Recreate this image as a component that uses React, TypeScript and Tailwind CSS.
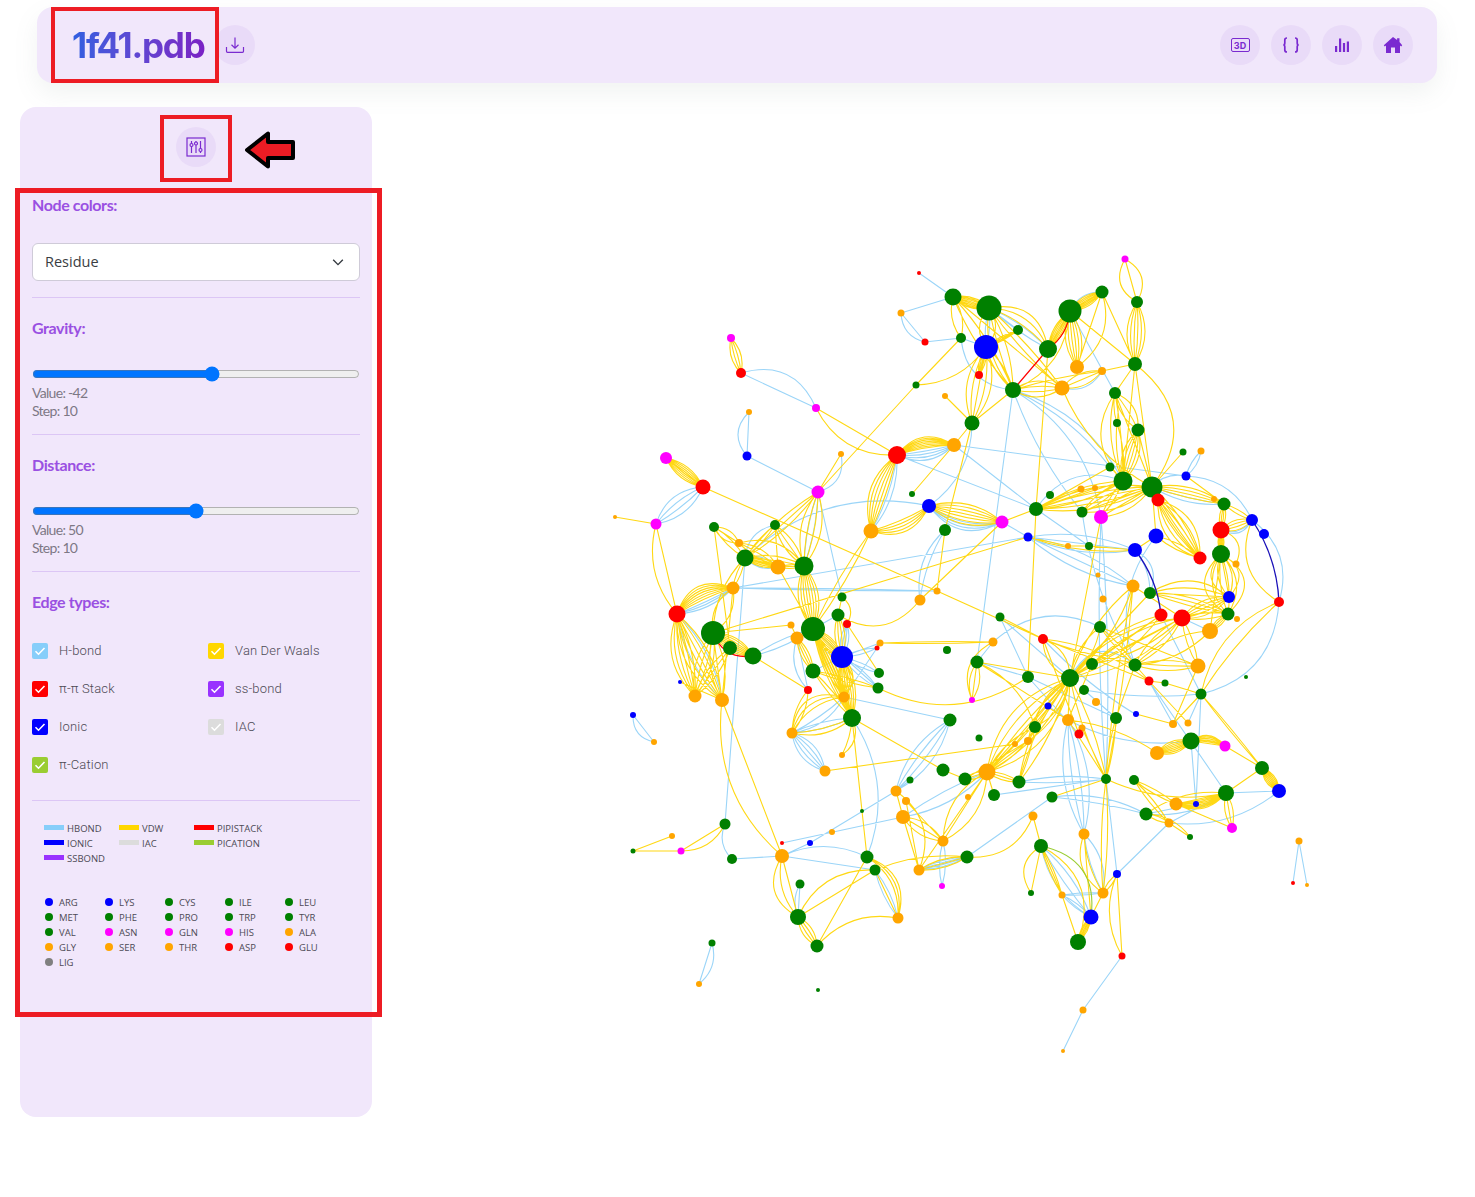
import React from 'react'

// graph data in page coordinates: x,y,radius
const greens = `953,297,8.5;989,308,12.5;1018,330,5;961,338,5;1048,349,9;1070,311,11.5;1102,292,6.5;1137,302,6;1135,364,7;1013,390,8;1115,393,6;972,423,7.5;1117,423,4;1138,430,6.5;1183,452,3.5;1110,467,4.5;1123,481,9.5;1152,487,10.5;1050,495,4;1224,504,6.5;1036,509,7;1082,512,5.5;1089,546,4;1221,554,9;1150,593,6;1228,614,6.5;1000,617,4.5;1100,627,6;947,650,4;977,662,6.5;1135,665,6.5;1092,664,6;1028,677,6;1070,678,9;1246,677,2;1165,683,3.5;1201,694,5.5;1084,690,5;1116,718,6;1035,727,6;979,738,3.5;1191,741,8.5;1262,768,7;965,779,6.5;1019,782,6.5;1106,779,5;1134,780,5;1226,793,8;994,795,6;1052,797,5.5;1146,814,6.5;1190,837,3;1041,846,7;967,857,6.5;1031,893,3;1078,942,8;916,385,3.5;912,494,3;714,527,5;775,525,5;745,558,8.5;804,566,9.5;945,530,6;842,597,4.5;838,615,6.5;713,633,12;813,629,12;730,648,7;753,656,8.5;813,671,7.5;879,673,5;878,688,5.5;852,718,9;950,720,6.5;943,770,6.5;910,780,3.5;862,811,2;725,824,5.5;633,851,2.5;867,857,6.5;732,859,5;875,870,5.5;800,884,4.5;798,917,8;817,946,6.5;712,943,3.5;818,990,2`
const oranges = `901,313,3.5;945,396,3;749,412,3;841,454,3;615,517,2;1077,367,7;1102,371,4;1062,388,7.5;954,445,7;1201,451,3.5;1081,489,3.5;1095,488,3;1214,499,3;1068,546,3;1236,564,3.5;1098,575,2.5;1133,586,6.5;1103,599,3.5;1237,619,3;1210,631,8;993,642,4.5;1198,666,7.5;1096,702,4;1068,720,6;1173,724,4;1188,723,3.5;1082,728,3.5;1028,741,4;1015,744,3;1157,753,7;987,772,8.5;968,797,3;1176,804,6.5;1033,816,4.5;1169,823,4.5;1299,841,3.5;1084,834,5.5;1307,885,2;1062,895,3.5;1103,893,5.5;1083,1010,3.5;1063,1051,2;871,531,7.5;739,543,4;778,567,7.5;733,588,6.5;937,591,3.5;920,600,5.5;791,625,3.5;797,638,6.5;880,643,3.5;695,696,6.5;722,700,7;844,697,5.5;792,733,5.5;654,742,3;842,755,3;825,771,5.5;896,791,5.5;906,801,4;903,817,7;672,836,3;832,832,3;943,841,5.5;782,856,7;919,870,5.5;898,918,5.5;699,984,3`
const reds = `919,273,2;925,342,3.5;741,373,5;897,455,9;703,487,7.5;979,375,4;1158,500,6.5;1221,530,8.5;1200,558,6.5;1279,602,5;1161,615,6.5;1182,618,8.5;1043,639,5;1149,681,4.5;1079,734,4.5;1293,883,2;1122,956,3.5;677,614,8.5;847,624,4;877,648,2.5;808,690,4;782,843,2`
const blues = `747,456,4.5;929,506,7;986,347,12;1186,476,4.5;1252,520,6;1264,534,5;1028,537,4.5;1156,536,7.5;1135,550,7;1229,597,6;1048,706,3.5;1136,714,3;1279,791,7;1196,804,3;1117,874,4;1091,917,7.5;842,657,11;680,682,2;633,715,3;810,843,3`
const magentas = `731,338,4;816,408,4;666,458,6;818,492,6.5;656,524,5.5;1125,259,3.5;1101,517,7;1002,522,6.5;972,700,3;1225,746,5.5;1232,828,5;681,851,3.5;942,886,3`

// edges: x1,y1,x2,y2,count,bulgeFrom,bulgeTo
const hbond = `919,273,953,297;901,313,953,297;901,313,925,342,2,0,-7;925,342,961,338;961,338,986,347;741,373,816,408,2,0,18;749,412,747,456,2,0,-10;747,456,818,492;703,487,656,524,4,-10,8;818,492,841,454,1,-10;897,455,954,445,4,-1,-10;897,455,871,531,2,4,8;745,558,929,506,1,25;989,308,986,347,2,-2,2;989,308,1018,330;989,308,1048,349,2,-2,4;986,347,979,375;961,338,1013,390,1,-15;1070,311,1102,292,1,6;1070,311,1115,393;1102,371,1062,388,1,8;1013,390,977,662;1013,390,1110,467,1,8;1013,390,1123,481,1,15;1013,390,1082,512,1,-6;1013,390,1101,517,1,18;1201,451,1186,476,2,-2,3;1186,476,1152,487,1,-5;1186,476,1252,520,1,12;1036,509,1123,481,1,18;1152,487,1224,504,2,-6,-2;1221,530,1252,520,2,-8,-6;1252,520,1279,602,1,15;1279,602,1201,694,1,22;954,445,1186,476;897,455,1036,509;954,445,1036,509;972,423,929,506,1,12;945,530,920,600,2,-10,-4;1002,522,1028,537;1002,522,929,506,4,8,16;1028,537,1135,550,3,-8,8;1028,537,1133,586,3,-8,8;733,588,1028,537;733,588,937,591,2,-1,1;818,492,804,566,2,-3,3;818,492,842,597;775,525,745,558,1,-8;745,558,778,567,2,-5,5;745,558,725,824;733,588,677,614,3,1,6;677,614,722,700,2,-8,8;753,656,813,629,2,-3,3;813,671,842,657;797,638,808,690,2,-8,0;838,615,813,629;847,624,842,657,4,-4,4;842,657,877,648,2,-2,2;842,657,880,643;842,657,879,673,2,-2,2;842,657,878,688,2,-3,3;813,629,878,688;877,648,844,697;792,733,852,718,2,-3,3;792,733,844,697,2,-8,-2;792,733,825,771,5,-8,8;844,697,950,720;852,718,867,857,1,18;725,824,732,859,1,-6;633,715,654,742,2,0,-7;712,943,699,984,2,0,7;732,859,782,856;782,856,810,843;782,843,903,817;810,843,896,791;782,856,867,857,1,10;782,856,875,870;800,884,798,917,2,0,-4;875,870,898,918,2,-3,3;919,870,967,857,4,-3,3;943,841,942,886,2,-3,3;910,780,896,791;896,791,950,720,4,-10,10;987,772,903,817,2,-3,8;994,795,1106,779;1019,782,1106,779,2,-2,4;967,857,1052,797;1068,720,1084,834,4,-12,12;1084,834,1103,893,2,-3,8;1106,779,1117,874;1041,846,1091,917,3,-10,6;1062,895,1103,893,2,-1,1;1062,895,1091,917,2,-2,2;1117,874,1169,823;1122,956,1083,1010;1083,1010,1063,1051;1169,823,1226,793;1279,791,1226,793;1279,791,1169,823,1,12;1196,804,1191,741;1196,804,1201,694;1146,814,1196,804;1052,797,1146,814,2,2,8;1146,814,1226,793,1,-8;993,642,1100,627,1,18;993,642,977,662;977,662,1028,677;1000,617,1070,678;1028,677,1079,734;1068,720,1048,706;1068,720,1191,741,1,-10;1084,690,1201,694,1,-4;1116,718,1084,690;1101,517,1106,779,2,-4,4;1149,681,1226,793;1149,681,1173,724;1201,694,1188,723;1182,618,1210,631;1082,512,1135,665,1,-8;1156,536,1135,665,1,-18;1161,615,1201,694;1135,550,1150,593,2,4,10;1299,841,1293,883;1299,841,1307,885;1135,665,1070,678,1,-20;1028,677,1116,718;1036,509,1089,546;842,657,813,629,1,8;1000,617,1028,677;1043,639,1135,714,1,-4`
const vdw = `731,338,741,373,4,-5,5;818,492,841,454;703,487,666,458,8,-6,6;897,455,954,445,8,2,13;897,455,871,531,6,-14,2;871,531,929,506,5,-14,-2;953,297,989,308,8,-5,5;953,297,961,338,2,-5,5;989,308,986,347,2,-8,8;989,308,1048,349,3,5,18;989,308,1013,390,3,-10,6;986,347,1013,390,2,-4,4;986,347,979,375,5,-3,3;986,347,972,423,5,-12,12;953,297,1013,390,2,-5,5;953,297,1062,388;1018,330,986,347,4,-2,2;989,308,1062,388,2,-3,3;1048,349,1070,311,8,-5,5;1070,311,1102,292,8,-5,5;1070,311,1077,367,6,-8,8;1102,292,1077,367,2,0,14;1070,311,1135,364;1102,292,1135,364;1125,259,1137,302,3,-11,11;1137,302,1135,364,6,-9,9;1135,364,1102,371;1102,371,1062,388,3,-6,6;1062,388,1013,390,4,-8,8;1013,390,1102,371,1,2;1070,311,1013,390,1,15;1013,390,972,423;1048,349,1036,509;1062,388,1152,487,1,-12;1135,364,1123,481;1135,364,1152,487;1135,364,1152,487,1,30;1115,393,1117,423,2,-2,2;1115,393,1138,430,3,-5,8;1115,393,1123,481,3,-18,2;1115,393,1152,487;1138,430,1123,481,6,-8,8;1117,423,1123,481,2,-3,3;1138,430,1152,487;1183,452,1152,487;1186,476,1224,504;1110,467,1123,481;1110,467,1036,509;1095,488,1036,509;1081,489,1036,509;1036,509,1123,481,3,-6,6;1036,509,1152,487,5,-10,10;1082,512,1123,481,2,-4,4;1082,512,1152,487,3,-8,8;1101,517,1152,487,3,-7,7;1101,517,1123,481,2,-2,2;1158,500,1200,558,6,-14,14;1152,487,1200,558,4,-6,6;1152,487,1224,504,4,-2,8;1224,504,1221,530,4,-3,3;1221,530,1252,520,4,-5,5;1221,530,1221,554,6,-3,3;1224,504,1252,520,2,-2,2;1221,554,1229,597,5,-14,14;1221,554,1228,614,6,-20,20;1221,554,1236,564;1221,530,1236,564,1,10;1252,520,1279,602,1,-18;1279,602,1201,694,2,-16,-4;1135,550,1156,536;1156,536,1200,558,2,-3,3;1156,536,1152,487;1182,618,1229,597,5,-7,7;1182,618,1228,614,2,-3,3;1182,618,1133,586;1150,593,1229,597,3,0,14;1150,593,1228,614,3,-2,6;1210,631,1221,554;1210,631,1228,614,4,-3,3;1182,618,1198,666,2,-3,3;1135,665,1198,666,2,-5,5;1135,665,1182,618,2,-6,6;1135,665,1210,631,2,-8,8;1070,678,1182,618,3,-14,14;1070,678,1161,615,3,-10,10;1070,678,1133,586,2,-8,8;1070,678,1100,627,2,-6,6;1070,678,1150,593;1092,664,1182,618,3,-8,8;1092,664,1161,615;1100,627,1198,666;1100,627,1135,665,2,-2,2;1043,639,1149,681,2,0,8;1043,639,1070,678,2,-8,8;1043,639,1198,666,1,-8;1000,617,1043,639;937,591,1043,639;993,642,880,643,2,-1,1;993,642,972,700,1,-14;977,662,972,700,3,-5,5;977,662,1070,678;977,662,1035,727,1,10;977,662,1068,720;1002,522,1036,509;1002,522,929,506,7,-10,10;1028,537,1068,546;1089,546,1068,546;1089,546,1135,550;1028,537,1135,550,1,-6;713,633,1028,537;703,487,937,591;818,492,745,558,3,-5,5;818,492,804,566,4,-10,10;816,408,897,455,2,0,-15;916,385,818,492;916,385,961,338;916,385,986,347,1,-10;945,396,972,423;954,445,912,494;972,423,954,445;972,423,945,530;945,530,937,591;1002,522,920,600;871,531,813,629,2,-3,3;656,524,677,614,2,0,-12;615,517,656,524;714,527,739,543,3,-5,5;714,527,745,558,2,-3,3;714,527,730,648;775,525,745,558,2,-2,2;775,525,804,566,3,-5,5;775,525,778,567;739,543,778,567,3,-3,6;739,543,804,566,1,12;745,558,778,567,6,-4,4;745,558,804,566,3,-3,6;778,567,804,566,3,-2,2;745,558,733,588,2,-2,2;745,558,713,633,1,-8;778,567,813,629;804,566,813,629,8,-10,10;733,588,677,614,7,-16,-2;733,588,713,633,2,-8,8;733,588,722,700;677,614,695,696,6,-14,6;677,614,722,700,6,-14,10;713,633,695,696,4,-8,8;713,633,722,700,3,-7,7;730,648,695,696,3,-5,5;680,682,722,700;713,633,753,656,8,-7,7;713,633,791,625;753,656,808,690;813,629,842,657,8,-6,6;842,657,844,697,6,-4,10;813,629,844,697,5,-5,5;813,629,852,718,6,-6,6;842,657,852,718,8,-8,8;813,671,852,718,2,-2,2;813,671,878,688,2,-2,2;797,638,813,671,4,-4,4;791,625,797,638;842,597,838,615;842,597,847,624,1,6;838,615,842,657,4,-5,5;847,624,879,673;878,688,1028,677,1,-22;920,600,838,615,1,18;792,733,852,718,2,-8,-3;792,733,808,690,2,-4,4;792,733,844,697,3,8,18;825,771,1015,744;852,718,842,755,2,2,8;852,718,943,770;852,718,862,811;862,811,867,857;722,700,782,856;722,700,782,856,1,-22;725,824,681,851,2,0,8;633,851,681,851;633,851,672,836;782,856,798,917,3,-16,0;798,917,875,870;798,917,875,870,1,15;798,917,817,946,4,-5,5;817,946,867,857;817,946,898,918,1,12;867,857,898,918,3,10,16;875,870,898,918;875,870,967,857,1,6;919,870,967,857,3,-4,4;896,791,919,870,1,16;903,817,919,870;906,801,919,870;896,791,903,817;903,817,943,841,3,-6,6;906,801,943,841;987,772,919,870;987,772,943,841,3,-12,12;987,772,965,779,3,-3,3;987,772,1019,782,3,-3,3;987,772,994,795;987,772,1070,678,6,-20,20;987,772,1035,727,2,-6,6;1015,744,987,772;1028,741,987,772;1019,782,1070,678,2,-6,6;1019,782,1035,727,2,-2,2;965,779,1028,741;943,770,965,779;1052,797,1106,779;1033,816,1041,846;967,857,1033,816,1,-14;1084,834,1103,893,2,-12,-4;1084,834,1091,917;1106,779,1103,893,2,-3,3;1041,846,1062,895,3,-2,2;1041,846,1031,893,2,0,-12;1041,846,1078,942,1,22;1062,895,1078,942;1091,917,1078,942,6,-3,3;1091,917,1103,893;1103,893,1117,874,2,-2,2;1117,874,1122,956;1117,874,1122,956,1,-10;1191,741,1157,753,8,-6,6;1191,741,1225,746,6,0,8;1225,746,1262,768;1201,694,1262,768,2,-1,1;1262,768,1279,791,8,-5,5;1226,793,1176,804,8,0,10;1226,793,1232,828,3,-4,4;1176,804,1232,828;1226,793,1146,814,1,-8;1226,793,1262,768;1226,793,1106,779,1,10;1146,814,1169,823,2,-2,2;1146,814,1190,837,1,6;1169,823,1190,837;1134,780,1176,804,2,-2,2;1134,780,1169,823,2,-2,2;1070,678,1035,727,3,-8,8;1070,678,1028,741,3,-8,8;1070,678,1015,744;1070,678,1106,779,2,-4,4;1070,678,1068,720;1070,678,1092,664;1092,664,1068,720;1079,734,1043,639;1101,517,1070,678;1133,586,1106,779,2,-3,3;1116,718,1106,779,2,-2,2;1116,718,1135,665;1135,665,1149,681;1149,681,1165,683;1165,683,1201,694;1149,681,1188,723;1201,694,1173,724;1198,666,1173,724;1136,714,1173,724;1068,720,1157,753,1,6;1036,509,1028,677;1135,364,1115,393;1070,678,987,772;1068,720,1106,779;1082,728,1106,779`
const ionic = `1252,520,1279,602,1,6;1135,550,1161,615,1,5`
const pipi = `1048,349,1013,390;1070,311,1048,349,1,5;713,633,753,656,2,-9,-9`
const pication = `1041,846,1091,917,1,20`

const nums = (s: string) => s.split(';').map((row) => row.split(',').map(Number))

function edgePaths(s: string) {
  const out: string[] = []
  for (const [x1, y1, x2, y2, n = 1, lo = 0, hi = lo] of nums(s)) {
    const dx = x2 - x1
    const dy = y2 - y1
    const len = Math.hypot(dx, dy) || 1
    for (let i = 0; i < n; i++) {
      const b = n > 1 ? lo + ((hi - lo) * i) / (n - 1) : lo
      const cx = (x1 + x2) / 2 + (dy / len) * b * 2
      const cy = (y1 + y2) / 2 - (dx / len) * b * 2
      out.push(`M${x1} ${y1}Q${cx.toFixed(1)} ${cy.toFixed(1)} ${x2} ${y2}`)
    }
  }
  return out.join('')
}

function Graph() {
  const groups: [string, string][] = [
    [greens, '#008000'],
    [oranges, '#ffa500'],
    [reds, '#ff0000'],
    [blues, '#0000ff'],
    [magentas, '#ff00ff'],
  ]
  return (
    <svg viewBox="372 107 1103 1090" className="h-[1090px] flex-1" fill="none">
      <path d={edgePaths(hbond)} stroke="#9bd5f8" strokeWidth="1.1" />
      <path d={edgePaths(vdw)} stroke="#ffd814" strokeWidth="1.1" />
      <path d={edgePaths(pication)} stroke="#9acd32" strokeWidth="1.1" />
      <path d={edgePaths(pipi)} stroke="#ff0000" strokeWidth="1.2" />
      <path d={edgePaths(ionic)} stroke="#1a10b8" strokeWidth="1.3" />
      {groups.map(([data, color]) =>
        nums(data).map(([x, y, r]) => <circle key={`${x}-${y}`} cx={x} cy={y} r={r} fill={color} />),
      )}
    </svg>
  )
}

function Round({ children }: { children: React.ReactNode }) {
  return (
    <div className="flex h-10 w-10 items-center justify-center rounded-full bg-[#e9dbf8] text-[#7a2ad0]">
      {children}
    </div>
  )
}

function Heading({ children, className }: { children: React.ReactNode; className: string }) {
  return (
    <div className={`h-5 font-['Lato',sans-serif] text-[16px] leading-5 font-bold tracking-[-0.4px] text-[#9a50e2] ${className}`}>
      {children}
    </div>
  )
}

function Rule({ className }: { className: string }) {
  return <div className={`h-px bg-[#dcc6f5] ${className}`} />
}

function Slider({ min, max, value, label }: { min: number; max: number; value: number; label: string }) {
  return (
    <>
      <input type="range" readOnly min={min} max={max} value={value} className="mt-7 block h-4 w-[328px]" />
      <div className="mt-0.5 font-['Lato',sans-serif] text-[14px] leading-[18px] tracking-[-0.7px] text-[#7d7885]">
        <div>Value: {label}</div>
        <div>Step: 10</div>
      </div>
    </>
  )
}

function Check({ label, color }: { label: string; color: string }) {
  return (
    <div className="flex h-[38px] items-center">
      <div className={`flex h-4 w-4 items-center justify-center rounded-[2px] ${color}`}>
        <svg viewBox="0 0 16 16" className="h-4 w-4" fill="none" stroke="#fff" strokeWidth="1.6">
          <path d="M3.5 8.2l3 3 6-6.2" />
        </svg>
      </div>
      <span className="ml-[11px] font-['Roboto',sans-serif] text-[13px] font-light tracking-[0.15px] text-[#4d4a55]">{label}</span>
    </div>
  )
}

const edgeLegend: [string, string][] = [
  ['HBOND', 'bg-[#87cefa]'],
  ['VDW', 'bg-[#ffd700]'],
  ['PIPISTACK', 'bg-[#ff0000]'],
  ['IONIC', 'bg-[#0000ff]'],
  ['IAC', 'bg-[#dcdcdc]'],
  ['PICATION', 'bg-[#9acd32]'],
  ['SSBOND', 'bg-[#9932ff]'],
]

const nodeLegend: [string, string][] = [
  ['ARG', 'bg-[#0000ff]'],
  ['LYS', 'bg-[#0000ff]'],
  ['CYS', 'bg-[#008000]'],
  ['ILE', 'bg-[#008000]'],
  ['LEU', 'bg-[#008000]'],
  ['MET', 'bg-[#008000]'],
  ['PHE', 'bg-[#008000]'],
  ['PRO', 'bg-[#008000]'],
  ['TRP', 'bg-[#008000]'],
  ['TYR', 'bg-[#008000]'],
  ['VAL', 'bg-[#008000]'],
  ['ASN', 'bg-[#ff00ff]'],
  ['GLN', 'bg-[#ff00ff]'],
  ['HIS', 'bg-[#ff00ff]'],
  ['ALA', 'bg-[#ffa500]'],
  ['GLY', 'bg-[#ffa500]'],
  ['SER', 'bg-[#ffa500]'],
  ['THR', 'bg-[#ffa500]'],
  ['ASP', 'bg-[#ff0000]'],
  ['GLU', 'bg-[#ff0000]'],
  ['LIG', 'bg-[#808080]'],
]

export default function App() {
  return (
    <div className="relative h-[1197px] overflow-hidden bg-white pt-[7px]">
      <header className="mr-[38px] ml-[37px] flex h-[76px] items-center rounded-2xl bg-[#f1e7fb] pr-6 pl-[35px] shadow-[0_10px_25px_rgba(120,140,130,0.10)]">
        <h1 className="w-[134px] bg-gradient-to-r from-[#2e5fe0] to-[#7a1fc4] bg-clip-text font-['Inter',sans-serif] text-[35px] leading-none font-bold tracking-[-1.2px] whitespace-nowrap text-transparent">
          1f41.pdb
        </h1>
        <div className="ml-[9px]">
          <Round>
            <svg viewBox="0 0 20 20" className="h-5 w-5" fill="none" stroke="currentColor" strokeWidth="1.2">
              <path d="M10 2.5v10.5M6.5 9.8l3.5 3.4 3.5-3.4M1.5 12v4.3q0 1 1 1h15q1 0 1-1V12" />
            </svg>
          </Round>
        </div>
        <div className="ml-auto flex gap-[11px]">
          <Round>
            <div className="flex h-[14px] w-[19px] items-center justify-center rounded-[2px] border border-[#7a2ad0] font-['Inter',sans-serif] text-[9px] leading-none font-bold">
              3D
            </div>
          </Round>
          <Round>
            <svg viewBox="0 0 20 20" className="h-5 w-5" fill="none" stroke="currentColor" strokeWidth="1.7">
              <path d="M6 3Q3.8 3 3.8 5v3q0 2-1.5 2 1.5 0 1.5 2v3q0 2 2.2 2M14 3q2.2 0 2.2 2v3q0 2 1.5 2-1.5 0-1.5 2v3q0 2-2.2 2" />
            </svg>
          </Round>
          <Round>
            <svg viewBox="0 0 20 20" className="h-5 w-5" fill="currentColor">
              <path d="M3 11h2.2v6H3zM7 3.5h2.2V17H7zM10.9 8h2.2v9h-2.2zM14.8 6.5H17V17h-2.2z" />
            </svg>
          </Round>
          <Round>
            <svg viewBox="0 0 20 20" className="h-5 w-5" fill="currentColor">
              <path d="M10 2 .8 10.3l1 1.2L3 10.5V18h5v-5.5h4V18h5v-7.5l1.2 1 1-1.2L16.5 7V3.2h-2.4v1.7z" />
            </svg>
          </Round>
        </div>
      </header>

      <div className="mt-6 flex">
        <aside className="ml-5 flex h-[1010px] w-[352px] shrink-0 flex-col rounded-2xl bg-[#f1e7fb] px-3 pt-5">
          <div className="flex justify-center">
            <Round>
              <svg viewBox="0 0 20 20" className="h-5 w-5" fill="none" stroke="currentColor" strokeWidth="1.2">
                <rect x="1" y="1" width="18" height="18" />
                <path d="M5.5 4v12M10 4v12M14.5 4v12" />
                <circle cx="5.5" cy="8" r="1.5" fill="#e9dbf8" />
                <circle cx="10" cy="6.5" r="1.5" fill="#e9dbf8" />
                <circle cx="14.5" cy="13" r="1.5" fill="#e9dbf8" />
              </svg>
            </Round>
          </div>
          <Heading className="mt-7">Node colors:</Heading>
          <div className="mt-7 flex h-[38px] w-[328px] items-center justify-between rounded-md border border-[#cfcbd8] bg-white pr-3.5 pl-3 font-['Open_Sans',sans-serif] text-[14.5px] text-[#3a3d42]">
            <span>Residue</span>
            <svg viewBox="0 0 16 16" className="h-3.5 w-3.5" fill="none" stroke="#343a40" strokeWidth="1.6">
              <path d="M2.5 5.5 8 11l5.5-5.5" />
            </svg>
          </div>
          <Rule className="mt-4" />
          <Heading className="mt-5">Gravity:</Heading>
          <Slider min={-200} max={87} value={-42} label="-42" />
          <Rule className="mt-[14px]" />
          <Heading className="mt-5">Distance:</Heading>
          <Slider min={0} max={100} value={50} label="50" />
          <Rule className="mt-[14px]" />
          <Heading className="mt-5">Edge types:</Heading>
          <div className="mt-5 grid grid-cols-[176px_1fr]">
            <Check label="H-bond" color="bg-[#87cefa]" />
            <Check label="Van Der Waals" color="bg-[#ffd700]" />
            <Check label="π-π Stack" color="bg-[#ff0000]" />
            <Check label="ss-bond" color="bg-[#9932ff]" />
            <Check label="Ionic" color="bg-[#0000ff]" />
            <Check label="IAC" color="bg-[#dcdcdc]" />
            <Check label="π-Cation" color="bg-[#9acd32]" />
          </div>
          <Rule className="mt-4" />
          <div className="mt-5 ml-3 grid w-[225px] grid-cols-3 font-['Open_Sans',sans-serif] text-[9.5px] leading-[15px] text-[#4d4a55]">
            {edgeLegend.map(([name, color]) => (
              <div key={name} className="flex h-[15px] items-center">
                <span className={`mb-0.5 h-[5px] w-5 ${color}`} />
                <span className="ml-[3px]">{name}</span>
              </div>
            ))}
          </div>
          <div className="mt-[29px] ml-[13px] grid w-[300px] grid-cols-5 font-['Open_Sans',sans-serif] text-[9.5px] leading-[15px] text-[#4d4a55]">
            {nodeLegend.map(([name, color]) => (
              <div key={name} className="flex h-[15px] items-center">
                <span className={`mb-0.5 h-2 w-2 rounded-full ${color}`} />
                <span className="ml-[6px]">{name}</span>
              </div>
            ))}
          </div>
        </aside>
        <Graph />
      </div>

      {/* annotations drawn on top of the screenshot */}
      <div className="absolute top-[7px] left-[51px] h-[76px] w-[168px] border-4 border-[#ed1c24]" />
      <div className="absolute top-[115px] left-[160px] h-[67px] w-[72px] border-4 border-[#ed1c24]" />
      <div className="absolute top-[188px] left-[15px] h-[829px] w-[367px] border-[5px] border-[#ed1c24]" />
      <svg className="absolute top-[125px] left-[238px] h-[50px] w-[62px]" viewBox="238 125 62 50">
        <path d="M247 150 268 133.500v8.500h25v16h-25v8.500z" fill="#ed1c24" stroke="#000" strokeWidth="4" strokeLinejoin="round" />
      </svg>
    </div>
  )
}
